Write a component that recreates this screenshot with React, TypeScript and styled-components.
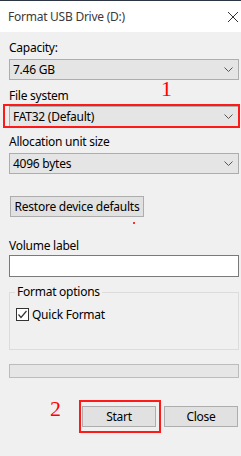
import React from 'react';
import styled, { createGlobalStyle } from 'styled-components';

const GlobalStyle = createGlobalStyle`
  html, body {
    margin: 0;
    padding: 0;
    background: #f0f0f0;
  }
  body {
    font-family: "Segoe UI", "Noto Sans", sans-serif;
    font-size: 12px;
    letter-spacing: -0.25px;
    color: #000;
  }
`;

const Window = styled.div`
  position: relative;
  width: 241px;
  height: 456px;
  background: #f0f0f0;
  overflow: hidden;
  box-sizing: border-box;
`;

const TitleBar = styled.div`
  height: 32px;
  box-sizing: border-box;
  border-top: 1px solid #2b3543;
  background: #ffffff;
  display: flex;
  align-items: center;
  justify-content: space-between;
  padding: 0 2px 0 8px;
`;

const Title = styled.span`
  font-size: 12px;
  color: #3a3a3a;
`;

const CloseIcon = styled.svg`
  width: 10px;
  height: 10px;
  margin-right: 1px;
`;

const Content = styled.div`
  display: flex;
  flex-direction: column;
  padding: 8px 2px 0 9px;
`;

const Label = styled.div<{ $top?: number }>`
  height: 16px;
  line-height: 16px;
  margin-top: ${(p) => p.$top ?? 0}px;
`;

const Combo = styled.div<{ $top?: number }>`
  height: 21px;
  box-sizing: border-box;
  margin-top: ${(p) => p.$top ?? 0}px;
  border: 1px solid #adadad;
  background: #e5e5e5;
  display: flex;
  align-items: center;
  justify-content: space-between;
  padding: 0 5px 0 3px;
`;

const Chevron = styled.svg`
  width: 9px;
  height: 5px;
`;

const Button = styled.button<{ $width: number; $top?: number }>`
  width: ${(p) => p.$width}px;
  height: 21px;
  margin-top: ${(p) => p.$top ?? 0}px;
  box-sizing: border-box;
  border: 1px solid #adadad;
  background: #e1e1e1;
  font-family: inherit;
  font-size: 12px;
  letter-spacing: inherit;
  color: #000;
  padding: 0;
  border-radius: 0;
`;

const TextInput = styled.div`
  height: 22px;
  margin-top: 1px;
  box-sizing: border-box;
  border: 1px solid #7a7a7a;
  background: #ffffff;
`;

const Group = styled.fieldset`
  margin: 7px 0 0 0;
  padding: 0 5px 27px 5px;
  border: 1px solid #dcdcdc;
  min-width: 0;
`;

const Legend = styled.legend`
  padding: 0 2px;
  line-height: 16px;
  font-size: 12px;
`;

const CheckRow = styled.label`
  display: flex;
  align-items: center;
  gap: 3px;
  height: 16px;
  margin-top: 6px;
  padding-left: 1px;
`;

const CheckBox = styled.span`
  width: 13px;
  height: 13px;
  box-sizing: border-box;
  border: 1px solid #333;
  background: #fff;
  display: flex;
  align-items: center;
  justify-content: center;
`;

const Progress = styled.div`
  height: 14px;
  margin-top: 14px;
  box-sizing: border-box;
  border: 1px solid #bcbcbc;
  background: #e6e6e6;
`;

const ButtonRow = styled.div`
  display: flex;
  justify-content: flex-end;
  gap: 8px;
  margin-top: 28px;
  margin-right: 1px;
`;

const RedBox = styled.div<{ $x: number; $y: number; $w: number; $h: number }>`
  position: absolute;
  left: ${(p) => p.$x}px;
  top: ${(p) => p.$y}px;
  width: ${(p) => p.$w}px;
  height: ${(p) => p.$h}px;
  box-sizing: border-box;
  border: 2px solid #ff1a1a;
  pointer-events: none;
`;

const Marker = styled.span<{ $x: number; $y: number }>`
  position: absolute;
  left: ${(p) => p.$x}px;
  top: ${(p) => p.$y}px;
  font-family: "Liberation Serif", serif;
  font-size: 22px;
  line-height: 22px;
  letter-spacing: 0;
  color: #ff0000;
`;

const Dot = styled.span`
  position: absolute;
  left: 133px;
  top: 222px;
  width: 2px;
  height: 2px;
  background: #ff3030;
`;

const ChevronDown = () => (
  <Chevron viewBox="0 0 9 5">
    <polyline points="0.5,0.5 4.5,4.5 8.5,0.5" fill="none" stroke="#555" strokeWidth="1" />
  </Chevron>
);

const App: React.FC = () => {
  return (
    <Window>
      <GlobalStyle />
      <TitleBar>
        <Title>Format USB Drive (D:)</Title>
        <CloseIcon viewBox="0 0 10 10">
          <path d="M0 0 L10 10 M10 0 L0 10" stroke="#333" strokeWidth="1" />
        </CloseIcon>
      </TitleBar>
      <Content>
        <Label>Capacity:</Label>
        <Combo $top={3}>
          <span>7.46 GB</span>
          <ChevronDown />
        </Combo>
        <Label $top={8}>File system</Label>
        <Combo $top={2}>
          <span>FAT32 (Default)</span>
          <ChevronDown />
        </Combo>
        <Label $top={7}>Allocation unit size</Label>
        <Combo $top={3}>
          <span>4096 bytes</span>
          <ChevronDown />
        </Combo>
        <Button $width={134} $top={22} style={{ marginLeft: 1 }}>
          Restore device defaults
        </Button>
        <Label $top={21}>Volume label</Label>
        <TextInput />
        <Group>
          <Legend>Format options</Legend>
          <CheckRow>
            <CheckBox>
              <svg width="11" height="11" viewBox="0 0 11 11">
                <polyline points="1.5,5.5 4,8.5 9.5,2" fill="none" stroke="#333" strokeWidth="1.2" />
              </svg>
            </CheckBox>
            <span>Quick Format</span>
          </CheckRow>
        </Group>
        <Progress />
        <ButtonRow>
          <Button $width={74}>Start</Button>
          <Button $width={74}>Close</Button>
        </ButtonRow>
      </Content>
      <RedBox $x={3} $y={104} $w={237} $h={24} />
      <RedBox $x={79} $y={400} $w={82} $h={33} />
      <Marker $x={161} $y={78}>1</Marker>
      <Marker $x={50} $y={398}>2</Marker>
      <Dot />
    </Window>
  );
};

export default App;
